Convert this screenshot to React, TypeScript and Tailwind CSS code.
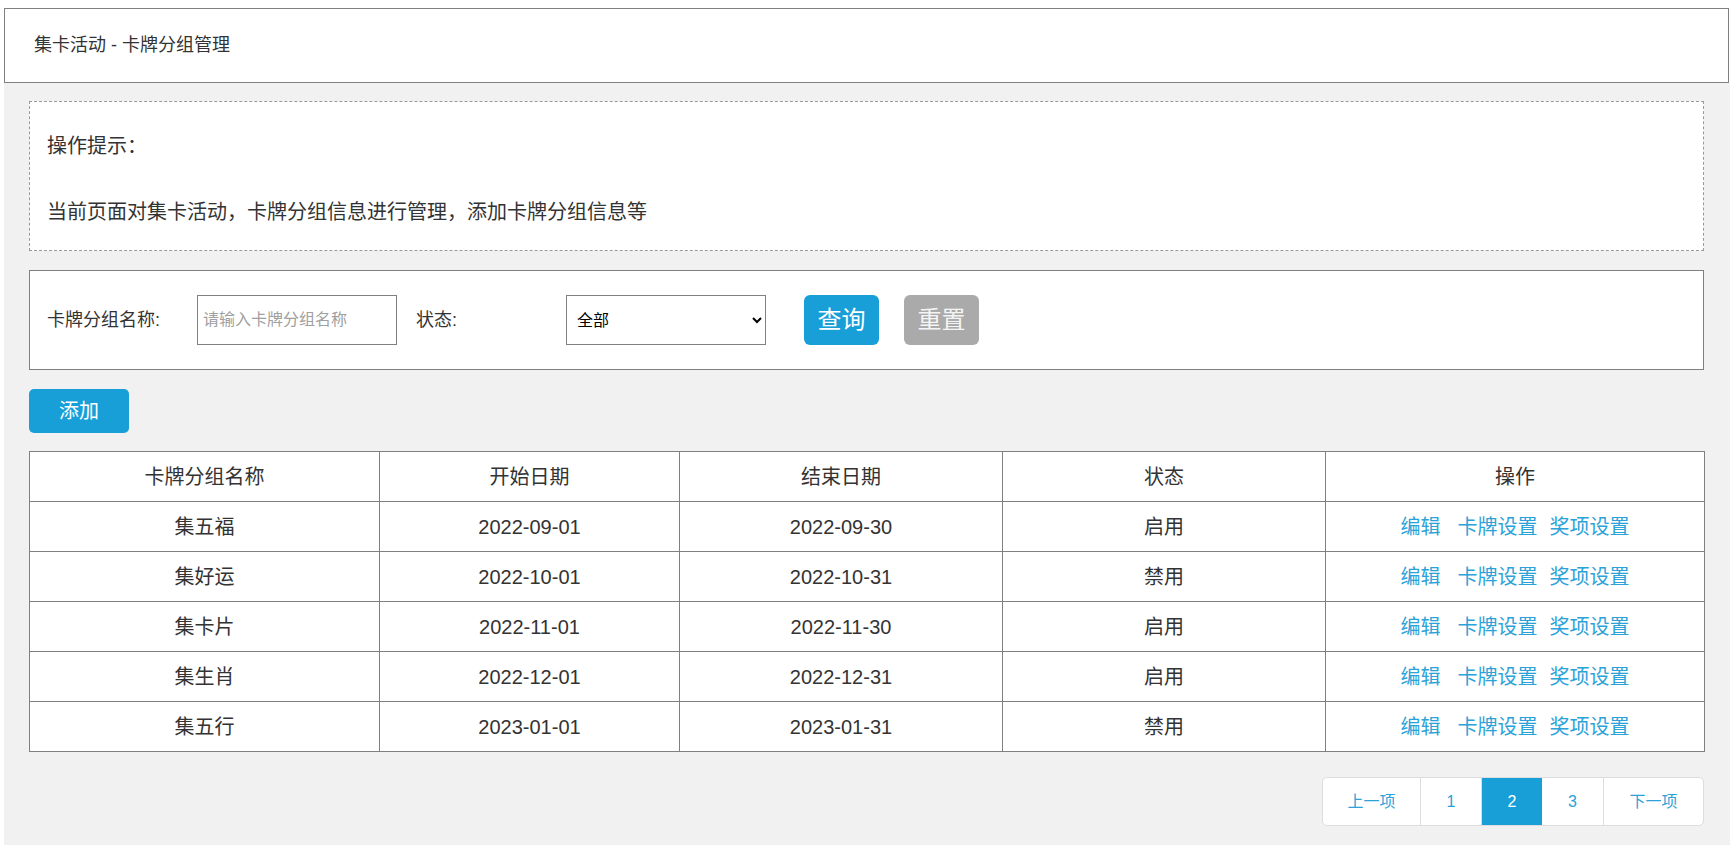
import React from "react";

const rows = [
  { name: "集五福", start: "2022-09-01", end: "2022-09-30", status: "启用" },
  { name: "集好运", start: "2022-10-01", end: "2022-10-31", status: "禁用" },
  { name: "集卡片", start: "2022-11-01", end: "2022-11-30", status: "启用" },
  { name: "集生肖", start: "2022-12-01", end: "2022-12-31", status: "启用" },
  { name: "集五行", start: "2023-01-01", end: "2023-01-31", status: "禁用" },
];

const cell = "border border-[#808080] text-center align-middle";

export default function App() {
  return (
    <div className="min-h-[845px] bg-white pt-[8px] font-['Liberation_Sans','Noto_Sans_CJK_SC',sans-serif] text-[#333]">
      <header className="ml-[4px] flex h-[75px] w-[1725px] items-center border border-[#808080] pl-[29px] text-[18px]">
        集卡活动 - 卡牌分组管理
      </header>

      <main className="ml-[4px] min-h-[763px] bg-[#f1f1f1] pl-[25px] pt-[18px] pb-[20px]">
        <div className="w-[1675px]">
          <section className="h-[150px] border border-dashed border-[#999] bg-white pl-[17px] pt-[31px] text-[20px] leading-[26px]">
            <p>操作提示：</p>
            <p className="mt-[40px]">当前页面对集卡活动，卡牌分组信息进行管理，添加卡牌分组信息等</p>
          </section>

          <section className="mt-[19px] flex h-[100px] items-center border border-[#808080] bg-white pl-[17px]">
            <label className="w-[150px] text-[18px]">卡牌分组名称:</label>
            <input
              className="h-[50px] w-[200px] border border-[#808080] bg-white px-[5px] text-[16px] outline-none placeholder:text-[#a0a0a0]"
              placeholder="请输入卡牌分组名称"
            />
            <label className="ml-[19px] w-[150px] text-[18px]">状态:</label>
            <select className="h-[50px] w-[200px] border border-[#808080] bg-white pl-[6px] text-[16px] text-black">
              <option>全部</option>
              <option>启用</option>
              <option>禁用</option>
            </select>
            <button className="ml-[38px] h-[50px] w-[75px] rounded-[6px] bg-[#189fd8] text-[24px] text-white">
              查询
            </button>
            <button className="ml-[25px] h-[50px] w-[75px] rounded-[6px] bg-[#aaaaaa] text-[24px] text-[#f4f4f4]">
              重置
            </button>
          </section>

          <button className="mt-[19px] h-[44px] w-[100px] rounded-[5px] bg-[#189fd8] text-[20px] text-white">
            添加
          </button>

          <table className="mt-[18px] w-[1675px] table-fixed border-collapse border border-[#808080] bg-white text-[20px]">
            <colgroup>
              <col className="w-[350px]" />
              <col className="w-[300px]" />
              <col className="w-[323px]" />
              <col className="w-[323px]" />
              <col className="w-[379px]" />
            </colgroup>
            <thead>
              <tr className="h-[50px]">
                <th className={`${cell} font-normal`}>卡牌分组名称</th>
                <th className={`${cell} font-normal`}>开始日期</th>
                <th className={`${cell} font-normal`}>结束日期</th>
                <th className={`${cell} font-normal`}>状态</th>
                <th className={`${cell} font-normal`}>操作</th>
              </tr>
            </thead>
            <tbody>
              {rows.map((row) => (
                <tr key={row.name} className="h-[50px]">
                  <td className={cell}>{row.name}</td>
                  <td className={cell}>{row.start}</td>
                  <td className={cell}>{row.end}</td>
                  <td className={cell}>{row.status}</td>
                  <td className={cell}>
                    <div className="flex justify-center text-[#2ba2d8]">
                      <a className="mr-[17px] cursor-pointer">编辑</a>
                      <a className="mr-[12px] cursor-pointer">卡牌设置</a>
                      <a className="cursor-pointer">奖项设置</a>
                    </div>
                  </td>
                </tr>
              ))}
            </tbody>
          </table>

          <div className="mt-[25px] flex justify-end">
            <nav className="flex h-[49px] overflow-hidden rounded-[5px] border border-[#dddddd] bg-white text-[16px] text-[#2ba2d8]">
              <a className="flex w-[98px] items-center justify-center border-r border-[#dddddd]">上一项</a>
              <a className="flex w-[61px] items-center justify-center border-r border-[#dddddd]">1</a>
              <a className="flex w-[60px] items-center justify-center bg-[#189fd8] text-white">2</a>
              <a className="flex w-[62px] items-center justify-center border-r border-[#dddddd]">3</a>
              <a className="flex w-[99px] items-center justify-center">下一项</a>
            </nav>
          </div>
        </div>
      </main>
    </div>
  );
}
